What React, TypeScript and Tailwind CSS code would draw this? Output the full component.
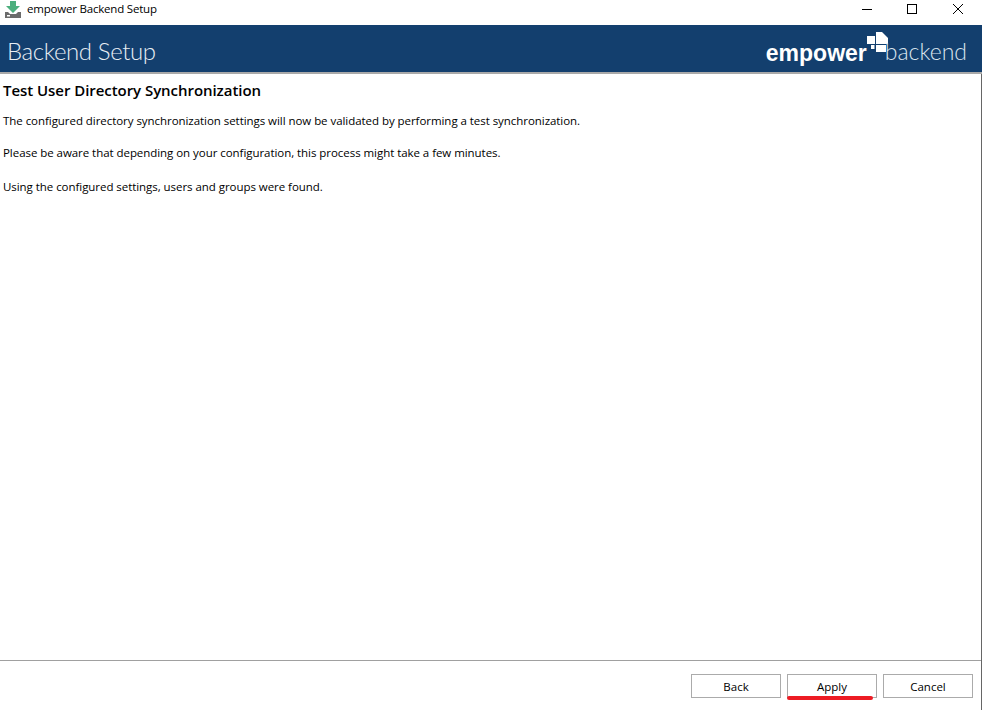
const font = { fontFamily: '"Open Sans", "Noto Sans", sans-serif' }

function WindowButtons() {
  return (
    <div className="flex items-center text-black">
      <svg width="12" height="12" viewBox="0 0 12 12" className="mr-[34px]">
        <path d="M2 6.5h10" stroke="currentColor" strokeWidth="1" fill="none" />
      </svg>
      <svg width="12" height="12" viewBox="0 0 12 12" className="mr-[34px]">
        <rect x="1.5" y="1.5" width="9" height="9" stroke="currentColor" strokeWidth="1" fill="none" />
      </svg>
      <svg width="12" height="12" viewBox="0 0 12 12" className="mr-[18px]">
        <path d="M1 1l10 10M11 1L1 11" stroke="currentColor" strokeWidth="1" fill="none" />
      </svg>
    </div>
  )
}

function AppIcon() {
  return (
    <svg width="16" height="17" viewBox="0 0 16 17">
      <path d="M5 0h6v5h4l-7 7-7-7h4z" fill="#4caf7d" />
      <path d="M0 11h3l2 2h6l2-2h3v6H0z" fill="#6b6b6b" />
      <rect x="2" y="14" width="3" height="1.5" fill="#ffffff" />
    </svg>
  )
}

function Logo() {
  return (
    <div className="flex items-end pb-[2px]">
      <span className="mb-[-2px] text-[23px] leading-[24px] font-bold text-white [font-family:'Liberation_Sans',sans-serif]">
        empower
      </span>
      <svg width="21" height="20" viewBox="0 0 21 20" className="mb-[11px] ml-[0px] mr-[-3px]">
        <path d="M0 4h8v8H0z" fill="#ffffff" />
        <path d="M9 0h6l6 6v6H9z" fill="#ffffff" />
        <path d="M4 13h3.500v4H4z" fill="#ffffff" />
        <path d="M9 13h10v7H9z" fill="#ffffff" />
      </svg>
      <span className="text-[23px] leading-[24px] font-light text-[#dbe5ee] [font-family:'Lato',sans-serif]">
        backend
      </span>
    </div>
  )
}

function Button({ label }: { label: string }) {
  return (
    <button className="w-[90px] h-[24px] pt-[2px] border border-[#ababab] bg-white text-[11.5px] leading-none text-black">
      {label}
    </button>
  )
}

export default function App() {
  return (
    <div className="w-[982px] h-[710px] flex flex-col bg-white overflow-hidden relative" style={font}>
      <div className="h-[25px] pb-[7px] flex items-center justify-between shrink-0">
        <div className="flex items-center pl-[5px] gap-[6px]">
          <AppIcon />
          <span className="text-[11.5px] tracking-[-0.2px] text-black">empower Backend Setup</span>
        </div>
        <WindowButtons />
      </div>

      <div className="h-[49px] shrink-0 bg-[#133f6e] border-b-2 border-[#a9a9a9] flex items-center justify-between pl-[7px] pr-[15px]">
        <span className="text-[24px] tracking-[-0.4px] pt-[4px] font-light text-[#e8eef4] [font-family:'Lato',sans-serif]">
          Backend Setup
        </span>
        <Logo />
      </div>

      <div className="flex-1 flex flex-col border-r border-[#666666]">
        <div className="flex-1 px-[3px] pt-[6px] text-black">
          <h1 className="text-[15px] leading-[20px] font-semibold tracking-[-0.05px]">
            Test User Directory Synchronization
          </h1>
          <p className="text-[11.5px] tracking-[-0.05px] leading-[16px] mt-[13px]">
            The configured directory synchronization settings will now be validated by performing a test synchronization.
          </p>
          <p className="text-[11.5px] tracking-[-0.05px] leading-[16px] mt-[16px]">
            Please be aware that depending on your configuration, this process might take a few minutes.
          </p>
          <p className="text-[11.5px] tracking-[-0.05px] leading-[16px] mt-[18px]">
            Using the configured settings, users and groups were found.
          </p>
        </div>

        <div className="h-[50px] shrink-0 border-t border-[#a0a0a0] flex justify-end items-start gap-[6px] pt-[13px] pr-[8px]">
          <Button label="Back" />
          <Button label="Apply" />
          <Button label="Cancel" />
        </div>
      </div>

      <div className="absolute left-[787px] top-[696px] w-[86px] h-[4px] rounded-full bg-[#ed1c24]" />
    </div>
  )
}
